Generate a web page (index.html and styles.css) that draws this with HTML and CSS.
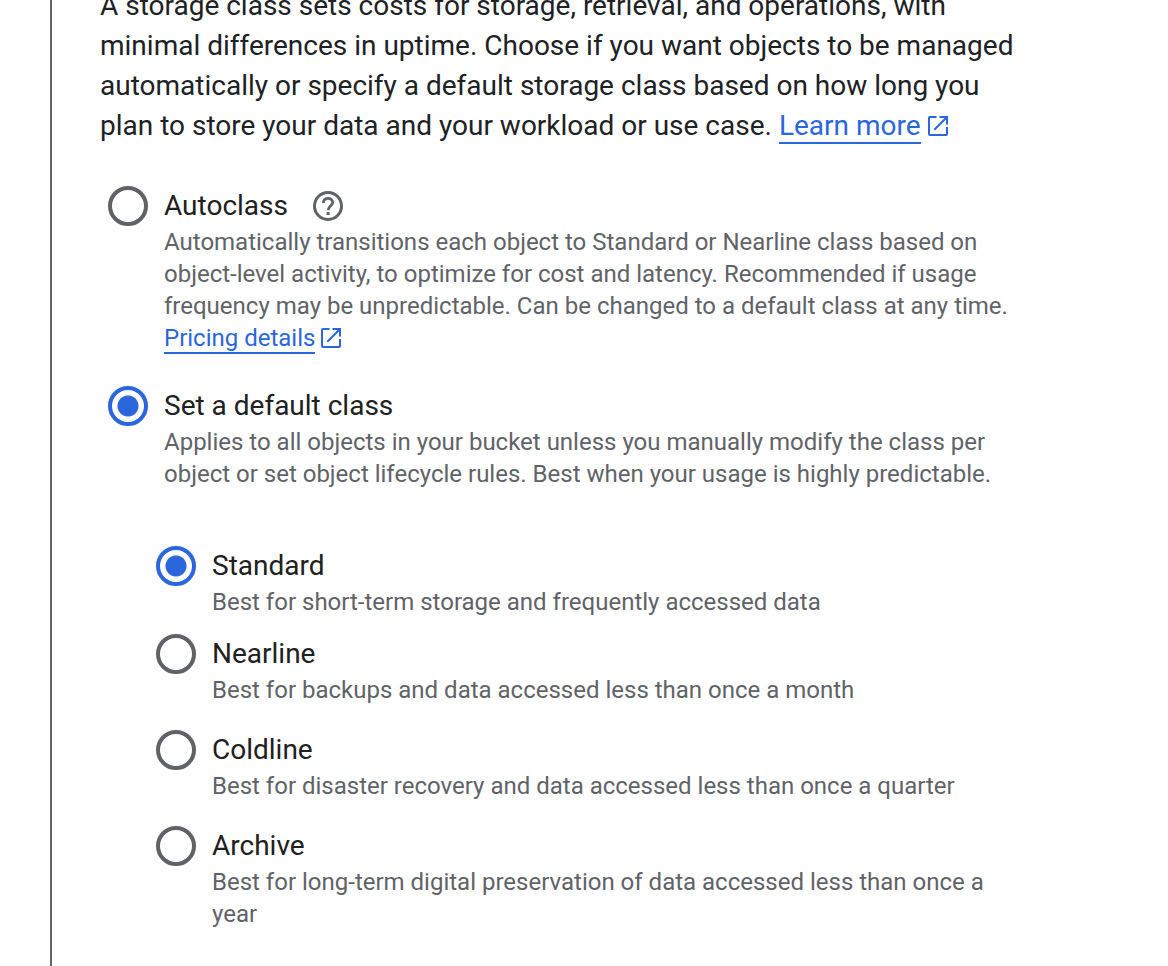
FILE: index.html
```html
<!DOCTYPE html>
<html lang="en">
<head>
<meta charset="utf-8">
<meta name="viewport" content="width=device-width, initial-scale=1">
<title>Choose a storage class</title>
<link rel="stylesheet" href="styles.css">
</head>
<body>
<svg class="symbols" aria-hidden="true">
  <symbol id="open-new" viewBox="0 0 20 20">
    <path d="M8.500 0V2H2V18H18V11H20V18Q20 20 18 20H2Q0 20 0 18V2Q0 0 2 0ZM11.500 0H20V8.500H18V3.400L7 14.400L5.600 13L16.600 2H11.500Z" fill="currentColor"/>
  </symbol>
</svg>
<main class="step">
  <p class="intro">A storage class sets costs for storage, retrieval, and operations, with minimal differences in uptime. Choose if you want objects to be managed automatically or specify a default storage class based on how long you plan to store your data and your workload or use case. <a class="link" href="#learn">Learn more</a><svg class="link-icon link-icon-large" aria-hidden="true"><use href="#open-new"/></svg></p>

  <div class="options">
    <div class="option">
      <input class="radio" type="radio" name="mode" id="autoclass" aria-describedby="autoclass-hint">
      <div class="option-body">
        <div class="option-head">
          <label class="option-title" for="autoclass">Autoclass</label>
          <button class="help" type="button" aria-label="About Autoclass">
            <svg class="help-icon" viewBox="0 0 30 30" aria-hidden="true">
              <circle cx="15" cy="15" r="13.500" fill="none" stroke="currentColor" stroke-width="3"/>
              <path d="M10.400 12C10.400 9 12.400 7.400 15 7.400S19.600 9 19.600 11.600C19.600 14.600 15.200 15.200 15.200 19.200" fill="none" stroke="currentColor" stroke-width="2.800"/>
              <path d="M13.600 21h3v3h-3z" fill="currentColor"/>
            </svg>
          </button>
        </div>
        <p class="hint" id="autoclass-hint">Automatically transitions each object to Standard or Nearline class based on object-level activity, to optimize for cost and latency. Recommended if usage frequency may be unpredictable. Can be changed to a default class at any time. <a class="link" href="#pricing">Pricing details</a><svg class="link-icon" aria-hidden="true"><use href="#open-new"/></svg></p>
      </div>
    </div>

    <div class="option">
      <input class="radio" type="radio" name="mode" id="default-class" aria-describedby="default-hint" checked>
      <div class="option-body">
        <label class="option-title" for="default-class">Set a default class</label>
        <p class="hint" id="default-hint">Applies to all objects in your bucket unless you manually modify the class per object or set object lifecycle rules. Best when your usage is highly predictable.</p>
      </div>
    </div>
  </div>

  <div class="classes" role="radiogroup" aria-label="Default class">
    <div class="option option-tight">
      <input class="radio" type="radio" name="class" id="standard" aria-describedby="standard-hint" checked>
      <div class="option-body">
        <label class="option-title" for="standard">Standard</label>
        <p class="hint" id="standard-hint">Best for short-term storage and frequently accessed data</p>
      </div>
    </div>
    <div class="option">
      <input class="radio" type="radio" name="class" id="nearline" aria-describedby="nearline-hint">
      <div class="option-body">
        <label class="option-title" for="nearline">Nearline</label>
        <p class="hint" id="nearline-hint">Best for backups and data accessed less than once a month</p>
      </div>
    </div>
    <div class="option">
      <input class="radio" type="radio" name="class" id="coldline" aria-describedby="coldline-hint">
      <div class="option-body">
        <label class="option-title" for="coldline">Coldline</label>
        <p class="hint" id="coldline-hint">Best for disaster recovery and data accessed less than once a quarter</p>
      </div>
    </div>
    <div class="option">
      <input class="radio" type="radio" name="class" id="archive" aria-describedby="archive-hint">
      <div class="option-body">
        <label class="option-title" for="archive">Archive</label>
        <p class="hint" id="archive-hint">Best for long-term digital preservation of data accessed less than once a year</p>
      </div>
    </div>
  </div>
</main>
</body>
</html>
```
FILE: styles.css
```css
* { box-sizing: border-box; }

html {
  height: 100%;
  overflow: hidden;
}

body {
  display: flow-root;
  min-height: 100%;
  margin: 0;
  background: #fff;
  color: #202124;
  font-family: Roboto, sans-serif;
  font-size: 28px;
  line-height: 40px;
}

.symbols {
  position: absolute;
  width: 0;
  height: 0;
}

.step {
  min-height: calc(100vh + 14px);
  margin-top: -14px;
  margin-left: 50px;
  padding-left: 48px;
  padding-right: 144px;
  padding-bottom: 36px;
  border-left: 2px solid #5f6368;
}

.intro,
.hint {
  margin: 0;
}

.link {
  border-bottom: 2px solid currentColor;
  color: #2c66dc;
  text-decoration: none;
  white-space: nowrap;
}

.link-icon {
  width: 20px;
  height: 20px;
  margin-left: 6px;
  color: #2c66dc;
  vertical-align: -2px;
}

.link-icon-large {
  margin-left: 7px;
  vertical-align: -1px;
}

.options,
.classes {
  display: grid;
}

.options {
  gap: 32px;
  margin-top: 40px;
  padding-left: 8px;
}

.classes {
  gap: 24px;
  margin-top: 56px;
  padding-left: 56px;
}

.option {
  display: flex;
  gap: 16px;
}

.option-tight {
  margin-bottom: -8px;
}

.radio {
  appearance: none;
  flex: none;
  width: 40px;
  height: 40px;
  margin: 0;
  border: 4px solid #5f6368;
  border-radius: 50%;
}

.radio:checked {
  border-color: #2c66dc;
  background: radial-gradient(circle, #2c66dc 10px, transparent 11px);
}

.option-body {
  flex: 1;
  min-width: 0;
}

.option-head {
  display: flex;
  align-items: center;
  gap: 25px;
}

.option-title {
  display: block;
  color: #202020;
}

.help {
  display: flex;
  padding: 0;
  border: 0;
  background: none;
  color: #5f6368;
}

.help-icon {
  width: 30px;
  height: 30px;
}

.hint {
  color: #5f6368;
  font-size: 24px;
  line-height: 32px;
}
```
